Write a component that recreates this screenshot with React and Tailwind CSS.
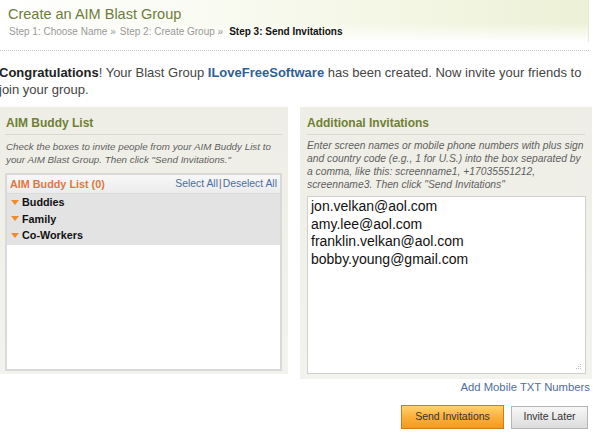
import React from "react";

function Tri() {
  return (
    <svg width="8" height="5" viewBox="0 0 8 5" className="mr-[3px] shrink-0">
      <polygon points="0,0 8,0 4,5" fill="#f08a2a" />
    </svg>
  );
}

export default function App() {
  const font = { fontFamily: '"Liberation Sans", Arial, sans-serif' };
  return (
    <div className="w-[595px] h-[445px] bg-white overflow-hidden relative" style={font}>
      {/* header */}
      <div className="h-[42px] w-[589px] bg-[linear-gradient(to_bottom,rgba(255,255,255,0)_55%,#ffffff),linear-gradient(to_right,#ffffff,#f6f8ea_55%,#edf1d6)] border-r border-[#e6e9d6] pl-[8px] pt-[6px]">
        <div className="text-[14.5px] leading-[17px] text-[#6d7c3b]">Create an AIM Blast Group</div>
        <div className="text-[10px] leading-[12px] mt-[3px] text-[#999] ml-[1px] flex gap-[4px]">
          <span>Step 1: Choose Name »</span>
          <span>Step 2: Create Group »</span>
          <span className="font-bold text-[#111] ml-[2px]">Step 3: Send Invitations</span>
        </div>
      </div>
      <div className="h-[9px] w-[589px] border-b border-dotted border-[#c8c8c8]" />

      {/* congratulations */}
      <div className="text-[13px] leading-[17px] text-[#444] -ml-[1px] mt-[13px] whitespace-nowrap">
        <span className="font-bold text-[#222]">Congratulations</span>! Your Blast Group{" "}
        <span className="font-bold text-[#2f5f9a]">ILoveFreeSoftware</span> has been created. Now invite your friends to
        <br />
        join your group.
      </div>

      <div className="flex mt-[9px] items-start">
        {/* left panel */}
        <div className="w-[288px] h-[267px] bg-gradient-to-b from-[#eeeee6] to-[#f3f3ee] pt-[9px] px-[5px]">
          <div className="text-[12px] leading-[14px] font-bold text-[#6f8035] pl-[1px]">AIM Buddy List</div>
          <div className="border-b border-[#d8d8cc] mt-[4px] mr-[1px]" />
          <div className="text-[9.8px] leading-[13px] italic text-[#5f5f5f] mt-[5px] pl-[1px] pr-[4px]">
            Check the boxes to invite people from your AIM Buddy List to your AIM Blast Group. Then click "Send Invitations."
          </div>
          <div className="mt-[7px] w-[277px] h-[198px] bg-white border-[2px] border-[#d9d9d9]">
            <div className="h-[19px] flex items-center justify-between px-[3px] bg-gradient-to-b from-[#f8f8f8] to-[#ececec] border-b border-[#dcdcdc]">
              <span className="text-[10.8px] font-bold text-[#e2773f]">AIM Buddy List (0)</span>
              <span className="text-[10.4px] text-[#4a6f9e]">Select All<span className="text-[#666] mx-[1px]">|</span>Deselect All</span>
            </div>
            <div className="bg-[#e3e3e3] pt-[0px] pb-[1px] text-[10.8px] font-bold text-[#111]">
              {["Buddies", "Family", "Co-Workers"].map((n) => (
                <div key={n} className="h-[16.5px] flex items-center pl-[4px]">
                  <Tri />
                  {n}
                </div>
              ))}
            </div>
          </div>
        </div>

        <div className="w-[12px]" />

        {/* right panel */}
        <div className="w-[292px] h-[272px] bg-gradient-to-b from-[#eeeee6] to-[#f3f3ee] pt-[9px] px-[7px]">
          <div className="text-[12px] leading-[14px] font-bold text-[#6f8035]">Additional Invitations</div>
          <div className="border-b border-[#d8d8cc] mt-[4px]" />
          <div className="text-[10.3px] leading-[13px] italic text-[#5f5f5f] mt-[4px]">
            Enter screen names or mobile phone numbers with plus sign and country code (e.g., 1 for U.S.) into the box separated by a comma, like this: screenname1, +17035551212, screenname3. Then click "Send Invitations"
          </div>
          <div className="relative mt-[5px] w-[279px] h-[178px] bg-white border border-[#cfcfcf] pt-[1px] pl-[3px] text-[14px] leading-[17.5px] text-[#111]">
            <div>jon.velkan@aol.com</div>
            <div>amy.lee@aol.com</div>
            <div>franklin.velkan@aol.com</div>
            <div>bobby.young@gmail.com</div>
            <svg width="7" height="7" viewBox="0 0 7 7" className="absolute right-[3px] bottom-[3px]">
              <g fill="#bbb">
                <rect x="5" y="1" width="1" height="1" />
                <rect x="3" y="3" width="1" height="1" />
                <rect x="5" y="3" width="1" height="1" />
                <rect x="1" y="5" width="1" height="1" />
                <rect x="3" y="5" width="1" height="1" />
                <rect x="5" y="5" width="1" height="1" />
              </g>
            </svg>
          </div>
        </div>
      </div>

      <div className="w-[590px] text-right text-[11.3px] leading-[14px] text-[#4f6e9c] mt-[1px]">Add Mobile TXT Numbers</div>

      <div className="flex justify-end gap-[7px] w-[588px] mt-[11px] items-center">
        <button className="w-[103px] h-[24px] text-[10.5px] text-[#333] border border-[#d17a1a] bg-gradient-to-b from-[#ffd36a] via-[#fbb03c] to-[#f39a1c]">
          Send Invitations
        </button>
        <button className="w-[77px] h-[23px] text-[10.5px] text-[#333] border border-[#b5b5b5] bg-gradient-to-b from-[#f7f7f7] to-[#dcdcdc]">
          Invite Later
        </button>
      </div>
    </div>
  );
}
